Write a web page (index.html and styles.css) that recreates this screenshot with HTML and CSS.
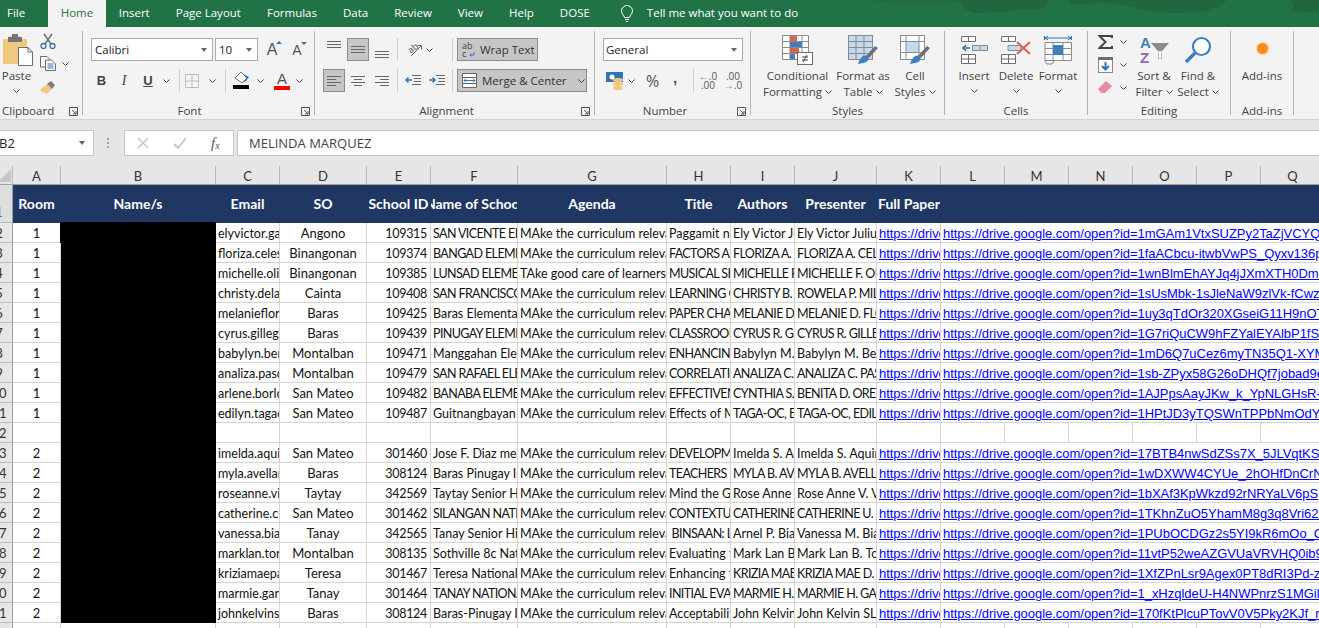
FILE: index.html
```html
<!DOCTYPE html>
<html lang="en">
<head>
<meta charset="utf-8">
<title>Excel sheet</title>
<link rel="stylesheet" href="styles.css">
</head>
<body>
<div class="app">
  <header class="tabs">
    <svg class="pattern" viewBox="0 0 449 27" width="449" height="27" aria-hidden="true">
      <path d="M0 0H89C86 3 70 5 40 4C25 3 10 3 0 0Z" fill="#226b43"/>
      <path d="M88 0H178C178 6 172 10 165 10C150 8 125 14 108 13C98 12 92 8 88 0Z" fill="#22663f"/>
      <path d="M200 0H357C350 8 335 13 310 13C280 14 265 6 240 3C225 2 212 4 200 5Z" fill="#22663f"/>
      <path d="M421 0H449V12C440 11 430 12 421 13C424 8 424 4 421 0Z" fill="#22663f"/>
    </svg>
    <span class="tab tab-file">File</span>
    <span class="tab tab-active">Home</span>
    <span class="tab">Insert</span>
    <span class="tab">Page Layout</span>
    <span class="tab">Formulas</span>
    <span class="tab">Data</span>
    <span class="tab">Review</span>
    <span class="tab">View</span>
    <span class="tab">Help</span>
    <span class="tab">DOSE</span>
    <svg class="bulb" viewBox="0 0 14 18" width="14" height="18" aria-hidden="true"><path d="M4.5 12.5C4 10 1.5 9 1.5 6A5.5 5.5 0 0 1 12.5 6C12.500 9 10 10 9.500 12.500ZM5 14.500H9M5.800 16.500H8.200" fill="none" stroke="#fff" stroke-width="1"/></svg>
    <span class="tell">Tell me what you want to do</span>
  </header>

  <section class="ribbon">
    <div class="group g-clip">
      <div class="body">
        <div class="big paste">
          <div class="big-icon">
            <svg viewBox="0 0 30 32" width="30" height="32"><path d="M0 5H7V2H9V0H15V2H17V5H24V17H17V30H0Z" fill="#efc97f"/><rect x="5" y="3" width="14" height="5" fill="#757575"/><rect x="9" y="0" width="6" height="4" fill="#757575"/><path d="M15.500 13.500H25L29.500 18V31.500H15.500Z" fill="#fff" stroke="#6d6d6d"/><path d="M25 13.500V18H29.500" fill="none" stroke="#6d6d6d"/></svg>
          </div>
          <span class="lbl">Paste</span>
          <svg class="chev" viewBox="0 0 7 4" width="7" height="4"><path d="M.5.500L3.500 3.500L6.500.500" /></svg>
        </div>
        <div class="clip-tools">
          <svg viewBox="0 0 16 16" width="16" height="16"><path d="M4 1L11 11M12 1L5 11" stroke="#6d6d6d" stroke-width="1.400" fill="none"/><circle cx="3.500" cy="13" r="2.500" fill="none" stroke="#2f75b5" stroke-width="1.300"/><circle cx="12.500" cy="13" r="2.500" fill="none" stroke="#2f75b5" stroke-width="1.300"/></svg>
          <div class="tool-row">
            <svg viewBox="0 0 16 15" width="16" height="15"><path d="M.5.500H7L9 2.500V11H.5Z" fill="#fff" stroke="#6d6d6d"/><path d="M5.500 4H11.500L15.500 8V14.500H5.500Z" fill="#fff" stroke="#6d6d6d"/><path d="M7.500 8H13.500M7.500 10H13.500M7.500 12H13.500" stroke="#2f75b5"/></svg>
            <svg class="chev" viewBox="0 0 7 4" width="7" height="4"><path d="M.5.500L3.500 3.500L6.500.500" /></svg>
          </div>
          <svg class="painter" viewBox="0 0 16 15" width="16" height="15"><path d="M0 10L7 4L12 9L7 14L4 12L3 13Z" fill="#efc97f"/><path d="M7 4L11 1L15 5L12 9Z" fill="#7c7c7c"/></svg>
        </div>
      </div>
      <div class="glabel glabel-clip">Clipboard<svg class="launch" viewBox="0 0 9 9" width="9" height="9"><path d="M.5 8.500V.5H8.500V8.500ZM3 3L7 7M7 4V7H4" fill="none" stroke="#555"/></svg></div>
    </div>

    <div class="group g-font">
      <div class="body col">
        <div class="row">
          <div class="combo combo-name"><span>Calibri</span><i class="tri"></i></div>
          <div class="combo combo-size"><span>10</span><i class="tri"></i></div>
          <span class="size-btn size-grow">A<i class="cap cap-up"></i></span>
          <span class="size-btn size-shrink">A<i class="cap cap-down"></i></span>
        </div>
        <div class="row">
          <span class="ti ti-b">B</span>
          <span class="ti ti-i">I</span>
          <span class="ti ti-u">U</span>
          <svg class="chev chev-u" viewBox="0 0 7 4" width="7" height="4"><path d="M.5.500L3.500 3.500L6.500.500" /></svg>
          <i class="vsep vsep-font1"></i>
          <svg class="icon-border" viewBox="0 0 14 14" width="14" height="14"><path d="M.5.500H13.500V13.500H.5ZM7 .5V13.500M.5 7H13.500" fill="none" stroke="#8a8a8a" stroke-dasharray="1 1"/></svg>
          <svg class="chev chev-b" viewBox="0 0 7 4" width="7" height="4"><path d="M.5.500L3.500 3.500L6.500.500" /></svg>
          <i class="vsep vsep-font2"></i>
          <svg class="icon-fill" viewBox="0 0 16 19" width="16" height="19"><path d="M2 7L8 1L14 7L9 12Z" fill="#fff" stroke="#6d6d6d"/><path d="M10 3L14 7L9 12L13 10L16 6Z" fill="#2f75b5"/><rect y="14" width="16" height="4" fill="#000"/></svg>
          <svg class="chev chev-f" viewBox="0 0 7 4" width="7" height="4"><path d="M.5.500L3.500 3.500L6.500.500" /></svg>
          <span class="color-a">A</span>
          <svg class="chev chev-c" viewBox="0 0 7 4" width="7" height="4"><path d="M.5.500L3.500 3.500L6.500.500" /></svg>
        </div>
      </div>
      <div class="glabel glabel-font">Font<svg class="launch" viewBox="0 0 9 9" width="9" height="9"><path d="M.5 8.500V.5H8.500V8.500ZM3 3L7 7M7 4V7H4" fill="none" stroke="#555"/></svg></div>
    </div>

    <div class="group g-align">
      <div class="body col">
        <div class="row">
          <span class="al al-top"><svg viewBox="0 0 14 7" width="14" height="7"><path d="M0 .5H14M0 3.500H14M0 6.500H14" stroke="#666"/></svg></span>
          <span class="al al-on"><svg viewBox="0 0 14 7" width="14" height="7"><path d="M0 .5H14M0 3.500H14M0 6.500H14" stroke="#666"/></svg></span>
          <span class="al al-bottom"><svg viewBox="0 0 14 7" width="14" height="7"><path d="M0 .5H14M0 3.500H14M0 6.500H14" stroke="#666"/></svg></span>
          <i class="vsep vsep-a1"></i>
          <svg class="orient" viewBox="0 0 16 15" width="16" height="15"><text x="2" y="10" transform="rotate(-40 6 7)" class="orient-t">ab</text><path d="M5 14L15 4M11.500 3.500H15.500V7.500" fill="none" stroke="#666"/></svg>
          <svg class="chev chev-o" viewBox="0 0 7 4" width="7" height="4"><path d="M.5.500L3.500 3.500L6.500.500" /></svg>
          <i class="vsep vsep-a2"></i>
          <span class="sel-btn wrap"><svg viewBox="0 0 13 16" width="13" height="16"><text x="0" y="7" class="wrap-t">ab</text><text x="0" y="15" class="wrap-t">c</text><path d="M12 10V13H8M9.500 11.500L8 13L9.500 14.500" fill="none" stroke="#2f75b5"/></svg>Wrap Text</span>
        </div>
        <div class="row">
          <span class="al al-on"><svg viewBox="0 0 14 10" width="14" height="10"><path d="M0 .5H14M0 3.500H9M0 6.500H14M0 9.500H9" stroke="#666"/></svg></span>
          <span class="al"><svg viewBox="0 0 14 10" width="14" height="10"><path d="M0 .5H14M3 3.500H11M0 6.500H14M3 9.500H11" stroke="#666"/></svg></span>
          <span class="al"><svg viewBox="0 0 14 10" width="14" height="10"><path d="M0 .5H14M5 3.500H14M0 6.500H14M5 9.500H14" stroke="#666"/></svg></span>
          <i class="vsep vsep-a3"></i>
          <svg class="indent" viewBox="0 0 16 12" width="16" height="12"><path d="M7 .5H16M9 3.500H16M9 6.500H16M7 9.500H16" stroke="#666"/><path d="M7 5H1M3.500 2.500L1 5L3.500 7.500" fill="none" stroke="#2f75b5" stroke-width="1.500"/></svg>
          <svg class="indent indent2" viewBox="0 0 16 12" width="16" height="12"><path d="M7 .5H16M9 3.500H16M9 6.500H16M7 9.500H16" stroke="#666"/><path d="M0 5H6M3.500 2.500L6 5L3.500 7.500" fill="none" stroke="#2f75b5" stroke-width="1.500"/></svg>
          <i class="vsep vsep-a4"></i>
          <span class="sel-btn merge"><svg viewBox="0 0 15 15" width="15" height="15"><path d="M.5.500H14.500V14.500H.5Z" fill="#fff" stroke="#666"/><path d="M.5 4.500H14.500M.5 10.500H14.500" stroke="#666"/><path d="M2 7.500H13M4 5.500L2 7.500L4 9.500M11 5.500L13 7.500L11 9.500" fill="none" stroke="#2f75b5"/></svg>Merge &amp; Center<svg class="chev chev-m" viewBox="0 0 7 4" width="7" height="4"><path d="M.5.500L3.500 3.500L6.500.500" /></svg></span>
        </div>
      </div>
      <div class="glabel glabel-align">Alignment<svg class="launch" viewBox="0 0 9 9" width="9" height="9"><path d="M.5 8.500V.5H8.500V8.500ZM3 3L7 7M7 4V7H4" fill="none" stroke="#555"/></svg></div>
    </div>

    <div class="group g-num">
      <div class="body col">
        <div class="row">
          <div class="combo combo-num"><span>General</span><i class="tri"></i></div>
        </div>
        <div class="row">
          <svg class="money" viewBox="0 0 18 18" width="18" height="18"><rect width="17" height="10" fill="#2f75b5"/><circle cx="6" cy="5" r="2.500" fill="#fff"/><ellipse cx="12" cy="8" rx="5" ry="2" fill="#efc97f"/><ellipse cx="12" cy="12" rx="5" ry="2" fill="#efc97f"/><ellipse cx="12" cy="16" rx="5" ry="2" fill="#efc97f"/></svg>
          <svg class="chev chev-money" viewBox="0 0 7 4" width="7" height="4"><path d="M.5.500L3.500 3.500L6.500.500" /></svg>
          <span class="pct">%</span>
          <span class="comma">,</span>
          <i class="vsep vsep-n"></i>
          <span class="dec dec-a"><b><em>&#8592;</em>.0</b><b>.00</b></span>
          <span class="dec dec-b"><b>.00</b><b><em>&#8594;</em>.0</b></span>
        </div>
      </div>
      <div class="glabel glabel-num">Number<svg class="launch" viewBox="0 0 9 9" width="9" height="9"><path d="M.5 8.500V.5H8.500V8.500ZM3 3L7 7M7 4V7H4" fill="none" stroke="#555"/></svg></div>
    </div>

    <div class="group g-styles">
      <div class="body">
        <div class="big big-cf">
          <div class="big-icon"><svg viewBox="0 0 31 30" width="31" height="30"><path d="M.5.500H26.500V24.500H.5ZM8 .5V24.500M20 .5V24.500M.5 6.500H26.500M.5 12.500H26.500M.5 18.500H26.500" fill="#fff" stroke="#8a8a8a"/><rect x="8" y="1" width="7" height="5" fill="#d9634a"/><rect x="8" y="7" width="12" height="5" fill="#3f7fbf"/><rect x="8" y="13" width="9" height="5" fill="#d9634a"/><rect x="8" y="19" width="5" height="5" fill="#3f7fbf"/><rect x="15.500" y="17.500" width="15" height="12" fill="#fff" stroke="#6d6d6d"/><path d="M20 22H26M20 25H26M25 20L21 27" stroke="#444" fill="none"/></svg></div>
          <span class="lbl">Conditional</span>
          <span class="lbl">Formatting <svg class="chev" viewBox="0 0 7 4" width="7" height="4"><path d="M.5.500L3.500 3.500L6.500.500" /></svg></span>
        </div>
        <div class="big big-ft">
          <div class="big-icon"><svg viewBox="0 0 30 30" width="30" height="30"><rect x=".5" y=".5" width="24" height="24" fill="#c5d9ee" stroke="#8a8a8a"/><path d="M.5 6.500H24.500M.5 12.500H24.500M.5 18.500H24.500M8 .5V24.500M16 .5V24.500" stroke="#8a8a8a" fill="none"/><path d="M18 21L27 11L30 13L21 23Z" fill="#707070"/><path d="M10 29C12 22 16 19 20 21C22 24 19 28 15 28Z" fill="#3f7fbf"/></svg></div>
          <span class="lbl">Format as</span>
          <span class="lbl">Table <svg class="chev" viewBox="0 0 7 4" width="7" height="4"><path d="M.5.500L3.500 3.500L6.500.500" /></svg></span>
        </div>
        <div class="big big-cs">
          <div class="big-icon"><svg viewBox="0 0 30 30" width="30" height="30"><rect x=".5" y=".5" width="24" height="24" fill="#fff" stroke="#8a8a8a"/><rect x="6" y="6" width="13" height="11" fill="#c5d9ee"/><path d="M.5 6.500H24.500M.5 17.500H24.500M6 .5V24.500M19 .5V24.500" stroke="#8a8a8a" fill="none"/><path d="M18 21L27 11L30 13L21 23Z" fill="#707070"/><path d="M10 29C12 22 16 19 20 21C22 24 19 28 15 28Z" fill="#3f7fbf"/></svg></div>
          <span class="lbl">Cell</span>
          <span class="lbl">Styles <svg class="chev" viewBox="0 0 7 4" width="7" height="4"><path d="M.5.500L3.500 3.500L6.500.500" /></svg></span>
        </div>
      </div>
      <div class="glabel">Styles</div>
    </div>

    <div class="group g-cells">
      <div class="body">
        <div class="big big-cell">
          <div class="big-icon"><svg viewBox="0 0 27 28" width="27" height="28"><path d="M.5.500H14.500V5.500H.5ZM7.500.5V5.500M.5 18.500H14.500V27.500H.5ZM7.500 18.500V27.500M.5 23H14.500" fill="#fff" stroke="#6d6d6d"/><path d="M11.500 9.500H26.500V14.500H11.500ZM19 9.500V14.500" fill="#c5d9ee" stroke="#8a8a8a"/><path d="M9 12H2M5 9L2 12L5 15" fill="none" stroke="#2f75b5" stroke-width="1.600"/></svg></div>
          <span class="lbl">Insert</span>
          <svg class="chev" viewBox="0 0 7 4" width="7" height="4"><path d="M.5.500L3.500 3.500L6.500.500" /></svg>
        </div>
        <div class="big big-cell">
          <div class="big-icon"><svg viewBox="0 0 30 28" width="30" height="28"><path d="M.5.500H14.500V5.500H.5ZM7.500.5V5.500M.5 18.500H14.500V27.500H.5ZM7.500 18.500V27.500M.5 23H14.500" fill="#fff" stroke="#6d6d6d"/><path d="M7 9.500H20V14.500H7Z" fill="#c5d9ee" stroke="#8a8a8a"/><path d="M16 6L29 18M29 6L16 18" stroke="#d9634a" stroke-width="2"/></svg></div>
          <span class="lbl">Delete</span>
          <svg class="chev" viewBox="0 0 7 4" width="7" height="4"><path d="M.5.500L3.500 3.500L6.500.500" /></svg>
        </div>
        <div class="big big-cell">
          <div class="big-icon"><svg viewBox="0 0 28 30" width="28" height="30"><path d="M.5 1V5M27.500 1V5M1 3H27M4 1L1 3L4 5M24 1L27 3L24 5" fill="none" stroke="#2f75b5"/><path d="M1 7.500H27.500V25.500H1ZM9 7.500V25.500M19 7.500V25.500M1 13.500H27.500M1 19.500H27.500" fill="#fff" stroke="#8a8a8a"/><rect x="9" y="10" width="10" height="10" fill="#3f7fbf"/><path d="M1 26L3 29H8L10 26" fill="none" stroke="#8a8a8a"/></svg></div>
          <span class="lbl">Format</span>
          <svg class="chev" viewBox="0 0 7 4" width="7" height="4"><path d="M.5.500L3.500 3.500L6.500.500" /></svg>
        </div>
      </div>
      <div class="glabel">Cells</div>
    </div>

    <div class="group g-edit">
      <div class="body">
        <div class="edit-tools">
          <div class="tool-row"><svg viewBox="0 0 15 14" width="15" height="14"><path d="M14 3V1H1.500L7.500 7L1.500 13H14V11" fill="none" stroke="#444" stroke-width="2"/></svg><svg class="chev" viewBox="0 0 7 4" width="7" height="4"><path d="M.5.500L3.500 3.500L6.500.500" /></svg></div>
          <div class="tool-row"><svg viewBox="0 0 15 16" width="15" height="16"><rect x=".5" y=".5" width="14" height="15" fill="#fff" stroke="#8a8a8a"/><rect width="15" height="3" fill="#6d6d6d"/><path d="M7.500 5V12M4 9L7.500 12.500L11 9" fill="none" stroke="#2f75b5" stroke-width="2"/></svg><svg class="chev" viewBox="0 0 7 4" width="7" height="4"><path d="M.5.500L3.500 3.500L6.500.500" /></svg></div>
          <div class="tool-row"><svg viewBox="0 0 15 13" width="15" height="13"><path d="M0 8L8 0L14 5L7 12H3Z" fill="#e98ba0"/></svg><svg class="chev" viewBox="0 0 7 4" width="7" height="4"><path d="M.5.500L3.500 3.500L6.500.500" /></svg></div>
        </div>
        <div class="big big-sort">
          <div class="big-icon"><svg viewBox="0 0 30 30" width="30" height="30"><text x="1" y="13" class="az az-a">A</text><text x="1" y="28" class="az az-z">Z</text><path d="M12 8H30L23 16V24H19V16Z" fill="#8a8a8a"/><path d="M19.500 16V23.500H22.500V16Z" fill="#fff"/></svg></div>
          <span class="lbl">Sort &amp;</span>
          <span class="lbl">Filter <svg class="chev" viewBox="0 0 7 4" width="7" height="4"><path d="M.5.500L3.500 3.500L6.500.500" /></svg></span>
        </div>
        <div class="big big-find">
          <div class="big-icon"><svg viewBox="0 0 28 28" width="28" height="28"><circle cx="17.500" cy="10.500" r="8.500" fill="#fff" stroke="#3f7fbf" stroke-width="2.200"/><path d="M11 17L2 26" stroke="#3f7fbf" stroke-width="3.500"/></svg></div>
          <span class="lbl">Find &amp;</span>
          <span class="lbl">Select <svg class="chev" viewBox="0 0 7 4" width="7" height="4"><path d="M.5.500L3.500 3.500L6.500.500" /></svg></span>
        </div>
      </div>
      <div class="glabel">Editing</div>
    </div>

    <div class="group g-add">
      <div class="body">
        <div class="big big-add">
          <div class="big-icon"><i class="dot"></i></div>
          <span class="lbl">Add-ins</span>
        </div>
      </div>
      <div class="glabel">Add-ins</div>
    </div>
  </section>

  <section class="fbar">
    <div class="namebox"><span>B2</span><i class="tri"></i></div>
    <div class="fdots"></div>
    <div class="fbtns">
      <svg viewBox="0 0 12 12" width="12" height="12"><path d="M1 1L11 11M11 1L1 11" stroke="#c8c8c8" stroke-width="1.600"/></svg>
      <svg viewBox="0 0 14 12" width="14" height="12"><path d="M1 7L5 11L13 1" fill="none" stroke="#c8c8c8" stroke-width="2"/></svg>
      <span class="fx">f<sub>x</sub></span>
    </div>
    <div class="finput">MELINDA MARQUEZ</div>
  </section>

  <table class="sheet">
    <colgroup><col class="w-rh"><col class="w-a"><col class="w-b"><col class="w-64"><col class="w-87"><col class="w-64"><col class="w-87"><col class="w-g"><col class="w-64"><col class="w-64"><col class="w-j"><col class="w-64"><col class="w-64"><col class="w-64"><col class="w-64"><col class="w-64"><col class="w-64"><col class="w-64"></colgroup>
    <thead>
      <tr class="colhead">
        <th class="corner"><i></i></th><th>A</th><th>B</th><th>C</th><th>D</th><th>E</th><th>F</th><th>G</th><th>H</th><th>I</th><th>J</th><th>K</th><th>L</th><th>M</th><th>N</th><th>O</th><th>P</th><th>Q</th>
      </tr>
    </thead>
    <tbody>
      <tr class="title">
        <th class="rh rh-blue"><span>1</span></th>
        <td><div>Room</div></td><td><div>Name/s</div></td><td><div>Email</div></td><td><div>SO</div></td><td><div>School ID</div></td><td><div>Name of School</div></td><td><div>Agenda</div></td><td><div>Title</div></td><td><div>Authors</div></td><td><div>Presenter</div></td><td class="t-left"><div>Full Paper</div></td><td></td><td></td><td></td><td></td><td></td><td></td>
      </tr>
      <tr><th class="rh"><span>2</span></th><td class="c">1</td><td class="redact" rowspan="20"></td><td>elyvictor.gabriel</td><td class="c">Angono</td><td class="r">109315</td><td class="u">SAN VICENTE ELEMENTARY</td><td>MAke the curriculum relevant</td><td>Paggamit ng</td><td>Ely Victor Julius</td><td>Ely Victor Julius</td><td class="lk"><a>https://drive.google.com/open</a></td><td class="lk" colspan="6"><a>https://drive.google.com/open?id=1mGAm1VtxSUZPy2TaZjVCYQ</a></td></tr>
      <tr><th class="rh"><span>3</span></th><td class="c">1</td><td>floriza.celestino</td><td class="c">Binangonan</td><td class="r">109374</td><td class="u">BANGAD ELEMENTARY</td><td>MAke the curriculum relevant</td><td class="u">FACTORS AFFECTING</td><td class="u">FLORIZA A. CELESTINO</td><td class="u">FLORIZA A. CELESTINO</td><td class="lk"><a>https://drive.google.com/open</a></td><td class="lk" colspan="6"><a>https://drive.google.com/open?id=1faACbcu-itwbVwPS_Qyxv136p</a></td></tr>
      <tr><th class="rh"><span>4</span></th><td class="c">1</td><td>michelle.olivar</td><td class="c">Binangonan</td><td class="r">109385</td><td class="u">LUNSAD ELEMENTARY</td><td>TAke good care of learners</td><td class="u">MUSICAL SKILLS</td><td class="u">MICHELLE F. OLIVAR</td><td class="u">MICHELLE F. OLIVAR</td><td class="lk"><a>https://drive.google.com/open</a></td><td class="lk" colspan="6"><a>https://drive.google.com/open?id=1wnBlmEhAYJq4jJXmXTH0Dm1</a></td></tr>
      <tr><th class="rh"><span>5</span></th><td class="c">1</td><td>christy.delacruz</td><td class="c">Cainta</td><td class="r">109408</td><td class="u">SAN FRANCISCO ELEM</td><td>MAke the curriculum relevant</td><td class="u">LEARNING GAP</td><td class="u">CHRISTY B. ROWELA</td><td class="u">ROWELA P. MILLAN</td><td class="lk"><a>https://drive.google.com/open</a></td><td class="lk" colspan="6"><a>https://drive.google.com/open?id=1sUsMbk-1sJleNaW9zlVk-fCwz</a></td></tr>
      <tr><th class="rh"><span>6</span></th><td class="c">1</td><td>melanieflores</td><td class="c">Baras</td><td class="r">109425</td><td>Baras Elementary</td><td>MAke the curriculum relevant</td><td class="u">PAPER CHAIN</td><td class="u">MELANIE D. FLORES</td><td class="u">MELANIE D. FLORES</td><td class="lk"><a>https://drive.google.com/open</a></td><td class="lk" colspan="6"><a>https://drive.google.com/open?id=1uy3qTdOr320XGseiG11H9nOT</a></td></tr>
      <tr><th class="rh"><span>7</span></th><td class="c">1</td><td>cyrus.gillego</td><td class="c">Baras</td><td class="r">109439</td><td class="u">PINUGAY ELEMENTARY</td><td>MAke the curriculum relevant</td><td class="u">CLASSROOM</td><td class="u">CYRUS R. GILLEGO</td><td class="u">CYRUS R. GILLEGO</td><td class="lk"><a>https://drive.google.com/open</a></td><td class="lk" colspan="6"><a>https://drive.google.com/open?id=1G7riQuCW9hFZYalEYAlbP1fS</a></td></tr>
      <tr><th class="rh"><span>8</span></th><td class="c">1</td><td>babylyn.bernal</td><td class="c">Montalban</td><td class="r">109471</td><td>Manggahan Elementary</td><td>MAke the curriculum relevant</td><td class="u">ENHANCING</td><td>Babylyn M. Bernal</td><td>Babylyn M. Bernal</td><td class="lk"><a>https://drive.google.com/open</a></td><td class="lk" colspan="6"><a>https://drive.google.com/open?id=1mD6Q7uCez6myTN35Q1-XYM</a></td></tr>
      <tr><th class="rh"><span>9</span></th><td class="c">1</td><td>analiza.pascual</td><td class="c">Montalban</td><td class="r">109479</td><td class="u">SAN RAFAEL ELEMENTARY</td><td>MAke the curriculum relevant</td><td class="u">CORRELATION</td><td class="u">ANALIZA C. PASCUAL</td><td class="u">ANALIZA C. PASCUAL</td><td class="lk"><a>https://drive.google.com/open</a></td><td class="lk" colspan="6"><a>https://drive.google.com/open?id=1sb-ZPyx58G26oDHQf7jobad9e</a></td></tr>
      <tr><th class="rh"><span>10</span></th><td class="c">1</td><td>arlene.borlongan</td><td class="c">San Mateo</td><td class="r">109482</td><td class="u">BANABA ELEMENTARY</td><td>MAke the curriculum relevant</td><td class="u">EFFECTIVENESS</td><td class="u">CYNTHIA S. TORRES</td><td class="u">BENITA D. OREJOLA</td><td class="lk"><a>https://drive.google.com/open</a></td><td class="lk" colspan="6"><a>https://drive.google.com/open?id=1AJPpsAayJKw_k_YpNLGHsR-</a></td></tr>
      <tr><th class="rh"><span>11</span></th><td class="c">1</td><td>edilyn.tagaoc</td><td class="c">San Mateo</td><td class="r">109487</td><td>Guitnangbayan Elementary</td><td>MAke the curriculum relevant</td><td>Effects of Mother</td><td class="u">TAGA-OC, EDILYN</td><td class="u">TAGA-OC, EDILYN</td><td class="lk"><a>https://drive.google.com/open</a></td><td class="lk" colspan="6"><a>https://drive.google.com/open?id=1HPtJD3yTQSWnTPPbNmOdY</a></td></tr>
      <tr><th class="rh"><span>12</span></th><td></td><td></td><td></td><td></td><td></td><td></td><td></td><td></td><td></td><td></td><td></td><td></td><td></td><td></td><td></td><td></td></tr>
      <tr><th class="rh"><span>13</span></th><td class="c">2</td><td>imelda.aquino</td><td class="c">San Mateo</td><td class="r">301460</td><td>Jose F. Diaz memorial</td><td>MAke the curriculum relevant</td><td class="u">DEVELOPMENT</td><td>Imelda S. Aquino</td><td>Imelda S. Aquino</td><td class="lk"><a>https://drive.google.com/open</a></td><td class="lk" colspan="6"><a>https://drive.google.com/open?id=17BTB4nwSdZSs7X_5JLVqtKS</a></td></tr>
      <tr><th class="rh"><span>14</span></th><td class="c">2</td><td>myla.avellaneda</td><td class="c">Baras</td><td class="r">308124</td><td>Baras Pinugay Integrated</td><td>MAke the curriculum relevant</td><td class="u">TEACHERS IN</td><td class="u">MYLA B. AVELLANEDA</td><td class="u">MYLA B. AVELLANEDA</td><td class="lk"><a>https://drive.google.com/open</a></td><td class="lk" colspan="6"><a>https://drive.google.com/open?id=1wDXWW4CYUe_2hOHfDnCrN</a></td></tr>
      <tr><th class="rh"><span>15</span></th><td class="c">2</td><td>roseanne.villar</td><td class="c">Taytay</td><td class="r">342569</td><td>Taytay Senior High</td><td>MAke the curriculum relevant</td><td>Mind the Gap</td><td>Rose Anne V. Villar</td><td>Rose Anne V. Villar</td><td class="lk"><a>https://drive.google.com/open</a></td><td class="lk" colspan="6"><a>https://drive.google.com/open?id=1bXAf3KpWkzd92rNRYaLV6pS</a></td></tr>
      <tr><th class="rh"><span>16</span></th><td class="c">2</td><td>catherine.cruz</td><td class="c">San Mateo</td><td class="r">301462</td><td class="u">SILANGAN NATIONAL</td><td>MAke the curriculum relevant</td><td class="u">CONTEXTUAL</td><td class="u">CATHERINE U. CRUZ</td><td class="u">CATHERINE U. CRUZ</td><td class="lk"><a>https://drive.google.com/open</a></td><td class="lk" colspan="6"><a>https://drive.google.com/open?id=1TKhnZuO5YhamM8g3q8Vri626</a></td></tr>
      <tr><th class="rh"><span>17</span></th><td class="c">2</td><td>vanessa.bianes</td><td class="c">Tanay</td><td class="r">342565</td><td>Tanay Senior High</td><td>MAke the curriculum relevant</td><td class="u">&nbsp;BINSAAN: Learning</td><td>Arnel P. Bianes</td><td>Vanessa M. Bianes</td><td class="lk"><a>https://drive.google.com/open</a></td><td class="lk" colspan="6"><a>https://drive.google.com/open?id=1PUbOCDGz2s5YI9kR6mOo_C</a></td></tr>
      <tr><th class="rh"><span>18</span></th><td class="c">2</td><td>marklan.torres</td><td class="c">Montalban</td><td class="r">308135</td><td>Sothville 8c National</td><td>MAke the curriculum relevant</td><td>Evaluating the</td><td>Mark Lan B. Torres</td><td>Mark Lan B. Torres</td><td class="lk"><a>https://drive.google.com/open</a></td><td class="lk" colspan="6"><a>https://drive.google.com/open?id=11vtP52weAZGVUaVRVHQ0ib9</a></td></tr>
      <tr><th class="rh"><span>19</span></th><td class="c">2</td><td>kriziamaepascual</td><td class="c">Teresa</td><td class="r">301467</td><td>Teresa National High</td><td>MAke the curriculum relevant</td><td>Enhancing the</td><td class="u">KRIZIA MAE D. PASCUAL</td><td class="u">KRIZIA MAE D. PASCUAL</td><td class="lk"><a>https://drive.google.com/open</a></td><td class="lk" colspan="6"><a>https://drive.google.com/open?id=1XfZPnLsr9Agex0PT8dRI3Pd-z</a></td></tr>
      <tr><th class="rh"><span>20</span></th><td class="c">2</td><td>marmie.garcia</td><td class="c">Tanay</td><td class="r">301464</td><td class="u">TANAY NATIONAL HIGH</td><td>MAke the curriculum relevant</td><td class="u">INITIAL EVALUATION</td><td class="u">MARMIE H. GARCIA</td><td class="u">MARMIE H. GARCIA</td><td class="lk"><a>https://drive.google.com/open</a></td><td class="lk" colspan="6"><a>https://drive.google.com/open?id=1_xHzqldeU-H4NWPnrzS1MGil</a></td></tr>
      <tr><th class="rh"><span>21</span></th><td class="c">2</td><td>johnkelvinsl</td><td class="c">Baras</td><td class="r">308124</td><td>Baras-Pinugay Integrated</td><td>MAke the curriculum relevant</td><td>Acceptability of</td><td>John Kelvin SL. Cruz</td><td>John Kelvin SL. Cruz</td><td class="lk"><a>https://drive.google.com/open</a></td><td class="lk" colspan="6"><a>https://drive.google.com/open?id=170fKtPlcuPTovV0V5Pky2KJf_r</a></td></tr>
      <tr><th class="rh"><span>22</span></th><td></td><td></td><td></td><td></td><td></td><td></td><td></td><td></td><td></td><td></td><td></td><td></td><td></td><td></td><td></td><td></td><td></td></tr>
    </tbody>
  </table>
</div>
</body>
</html>
```
FILE: styles.css
```css
* { box-sizing: border-box; }
html, body { margin: 0; padding: 0; overflow: hidden; }
body { font-family: "Open Sans", "Noto Sans", sans-serif; font-size: 11.5px; color: #333; }
.app { width: 1319px; height: 628px; overflow: hidden; background: #e6e6e6; }

/* tab strip */
.tabs { position: relative; display: flex; align-items: center; height: 27px; background: #217346; color: #fff; }
.pattern { position: absolute; top: 0; right: 0; }
.tab { position: relative; height: 27px; line-height: 25px; padding: 0 13px; white-space: nowrap; }
.tab-file { padding: 0 7px; margin-right: 16px; }
.tab-active { background: #f3f3f3; color: #217346; padding: 0 12.5px; }
.bulb { position: relative; margin-left: 17px; }
.tell { position: relative; margin-left: 13px; margin-top: -2px; white-space: nowrap; }

/* ribbon */
.ribbon { display: flex; height: 93px; padding-top: 4px; background: #f3f3f3; border-bottom: 1px solid #d2d2d2; }
.group { display: flex; flex-direction: column; height: 84px; border-right: 1px solid #b3b3b3; flex: none; }
.body { display: flex; height: 72px; }
.body.col { flex-direction: column; gap: 8px; padding-top: 7px; }
.row { display: flex; align-items: center; height: 23px; }
.glabel { position: relative; height: 12px; line-height: 16px; text-align: center; white-space: nowrap; color: #444; }
.launch { position: absolute; right: 4px; top: 4px; }
.g-clip { width: 83px; }
.g-font { width: 232px; }
.g-align { width: 280px; }
.g-num { width: 156px; }
.g-styles { width: 194px; }
.g-cells { width: 143px; }
.g-edit { width: 143px; }
.g-add { width: 63px; }
.g-font .body { padding-left: 8px; }
.g-align .body { padding-left: 8px; }
.g-num .body { padding-left: 8px; }
.glabel-clip { text-align: left; padding-left: 2px; }
.glabel-font { padding-right: 18px; }
.glabel-align { padding-right: 16px; }
.glabel-num { padding-right: 15px; }

.big { display: flex; flex-direction: column; align-items: center; flex: none; }
.big-icon { display: flex; align-items: center; justify-content: center; height: 37px; }
.lbl { line-height: 16px; white-space: nowrap; color: #444; }
.chev { fill: none; stroke: #444; stroke-width: 1; flex: none; }
.big > .chev { margin-top: 5px; }
.lbl .chev { vertical-align: 2px; }
.paste { width: 33px; }
.paste svg:not(.chev) { margin-left: 3px; }
.clip-tools { display: flex; flex-direction: column; align-items: flex-start; gap: 7px; padding: 2px 0 0 7px; }
.painter { margin-top: 2px; }
.tool-row { display: flex; align-items: center; gap: 6px; }

.combo { display: flex; align-items: center; justify-content: space-between; height: 23px; background: #fff; border: 1px solid #ababab; padding: 0 3px; color: #222; }
.combo-name { width: 122px; }
.combo-size { width: 43px; margin-left: 2px; }
.combo-num { width: 140px; padding-left: 2px; }
.tri { width: 0; height: 0; border: 3.5px solid transparent; border-top: 4px solid #666; border-bottom: 0; margin-right: 2px; }
.size-btn { position: relative; font-family: "Liberation Sans", sans-serif; color: #555; font-size: 16px; margin-left: 9px; width: 16px; text-align: center; }
.size-grow { margin-left: 6px; }
.size-shrink { font-size: 14px; }
.cap { position: absolute; right: -2px; top: 0; width: 0; height: 0; border: 3px solid transparent; }
.cap-up { border-top: 0; border-bottom: 3px solid #2f75b5; }
.cap-down { border-bottom: 0; border-top: 3px solid #2f75b5; }
.ti { display: inline-block; width: 24px; text-align: center; font: 13px "Liberation Sans", sans-serif; color: #444; }
.ti-b { width: 21px; font-weight: bold; }
.ti-i { font-style: italic; font-family: "Liberation Serif", serif; font-size: 14px; }
.ti-u { text-decoration: underline; font-weight: bold; }
.chev-u { margin: 0 4px 0 3px; }
.vsep { flex: none; width: 1px; height: 23px; background: #cfcfcf; }
.vsep-font1 { margin-left: 5px; }
.icon-border { margin-left: 5px; }
.chev-b { margin-left: 10px; }
.vsep-font2 { margin-left: 9px; }
.icon-fill { margin-left: 7px; }
.chev-f { margin-left: 8px; }
.color-a { margin-left: 10px; width: 16px; text-align: center; color: #555; font: 15px/14px "Liberation Sans", sans-serif; border-bottom: 4px solid #f00; }
.chev-c { margin-left: 6px; }

.al { display: flex; align-items: center; justify-content: center; width: 22px; height: 23px; margin-right: 2px; flex: none; }
.al-on { background: #c6c6c6; border: 1px solid #8c8c8c; }
.al-bottom svg { margin-top: 10px; }
.al-top svg { margin-bottom: 10px; }
.vsep-a1, .vsep-a3 { margin-left: 2px; }
.orient { margin-left: 8px; }
.orient-t { font: 9px "Open Sans", sans-serif; fill: #555; }
.wrap-t { font: 9px "Open Sans", sans-serif; fill: #444; }
.chev-o { margin-left: 4px; }
.vsep-a2 { margin-left: 19px; }
.indent { margin-left: 7px; }
.indent2 { margin-left: 8px; }
.vsep-a4 { margin-left: 7px; }
.sel-btn { display: flex; align-items: center; gap: 5px; height: 23px; margin-left: 4px; padding-left: 4px; background: #c6c6c6; border: 1px solid #8c8c8c; color: #333; white-space: nowrap; }
.wrap { width: 81px; }
.merge { width: 130px; }
.chev-m { margin-left: 6px; }

.money { margin-left: 3px; }
.chev-money { margin-left: 4px; }
.pct { width: 14px; margin-left: 11px; font-size: 16px; color: #555; }
.comma { width: 5px; margin-left: 13px; margin-top: -6px; font: bold 15px "Liberation Sans", sans-serif; color: #555; }
.vsep-n { margin-left: 15px; }
.dec { display: flex; flex-direction: column; width: 20px; margin-left: 4px; font-size: 10px; line-height: 9px; color: #555; text-align: center; }
.dec b { font-weight: normal; }
.dec em { font-style: normal; color: #2f75b5; }
.dec-b { margin-left: 5px; }

.g-styles .body { padding-left: 8px; }
.big-cf { width: 77px; }
.big-ft { width: 58px; margin-left: -2px; }
.big-cs { width: 40px; margin-left: 3px; }
.g-cells .body { padding-left: 8px; }
.big-cell { width: 42px; }
.g-edit .body { padding-left: 10px; }
.edit-tools { display: flex; flex-direction: column; gap: 6px; padding-top: 2px; width: 34px; }
.edit-tools .tool-row { gap: 7px; height: 17px; }
.az { font: bold 15px "Liberation Sans", sans-serif; }
.az-a { fill: #3f7fbf; }
.az-z { fill: #8e63b5; }
.big-sort { width: 44px; }
.big-find { width: 44px; }
.g-add .body { justify-content: center; }
.big-add { width: 50px; }
.dot { width: 11px; height: 11px; border-radius: 50%; background: #ff8c1a; box-shadow: 0 0 3px #ffb060; margin-top: -3px; }

/* formula bar */
.fbar { display: flex; align-items: center; height: 26px; margin-top: 10px; }
.namebox { display: flex; align-items: center; justify-content: space-between; width: 94px; height: 26px; padding: 0 6px 0 0; background: #fff; border: 1px solid #c6c6c6; border-left: 0; color: #222; font-size: 13px; }
.namebox span { margin-left: -1px; }
.fdots { width: 2px; height: 10px; margin: 0 15px 0 13px; border-left: 2px dotted #a0a0a0; }
.fbtns { display: flex; align-items: center; gap: 24px; width: 110px; height: 26px; padding-left: 12px; background: #fff; border: 1px solid #c6c6c6; }
.fx { font: italic 15px "Liberation Serif", serif; color: #555; }
.fx sub { font-size: 10px; vertical-align: -1px; }
.finput { flex: 1; height: 26px; margin-left: 3px; padding-left: 11px; line-height: 25px; background: #fff; border: 1px solid #c6c6c6; border-right: 0; color: #444; font-size: 13px; }

/* sheet */
.sheet { table-layout: fixed; border-collapse: separate; border-spacing: 0; width: 1325px; margin-top: 10px; background: #fff; font-family: Lato, "Liberation Sans", sans-serif; font-size: 12.5px; color: #111; }
.w-rh { width: 13px; }
.w-a { width: 48px; }
.w-b { width: 155px; }
.w-64 { width: 64px; }
.w-87 { width: 87px; }
.w-g { width: 149px; }
.w-j { width: 82px; }
.colhead th { height: 19px; padding: 1px 0 0; background: #e6e6e6; border-right: 1px solid #b8b8b8; border-bottom: 1px solid #9f9f9f; font-weight: normal; font-size: 13px; color: #333; }
.corner { position: relative; }
.corner i { position: absolute; right: 1px; bottom: 2px; width: 0; height: 0; border-left: 13px solid transparent; border-bottom: 13px solid #c6c6c6; }
.sheet tbody tr { height: 20px; }
.sheet tbody tr.title { height: 38px; }
.sheet td { padding: 2px 2px 0; overflow: hidden; white-space: nowrap; border-right: 1px solid #d4d4d4; border-bottom: 1px solid #d4d4d4; line-height: 17px; }
.sheet .u { letter-spacing: -0.6px; }
.rh { padding: 0; overflow: hidden; background: #e6e6e6; border-right: 1px solid #9f9f9f; border-bottom: 1px solid #bdbdbd; font-weight: normal; font-size: 13px; color: #333; }
.rh span { display: block; width: 28px; margin-left: -15px; text-align: center; }
.rh-blue { vertical-align: bottom; padding-bottom: 2px; background: #dedede; color: #217ac0; }
.sheet .title td { padding: 0; background: #203764; border-color: #203764; color: #fff; font-weight: bold; font-size: 14px; }
.title td div { display: flex; justify-content: center; white-space: nowrap; }
.title .t-left div { justify-content: flex-start; padding-left: 1px; }
.sheet td.c { text-align: center; font-size: 13px; }
.sheet td.r { padding-right: 3px; text-align: right; letter-spacing: -0.3px; }
.sheet td.redact { padding: 0; background: #000; border-color: #000; box-shadow: -1px -1px 0 #000; }
.sheet .lk { font-family: "Liberation Sans", Arial, sans-serif; font-size: 13px; letter-spacing: -0.03px; }
.lk a { color: #0000ff; text-decoration: underline; }
```
